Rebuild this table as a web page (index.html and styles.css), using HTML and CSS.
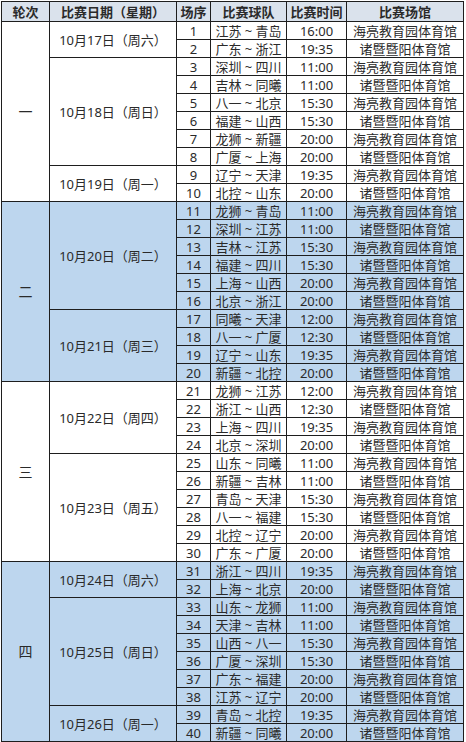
FILE: index.html
```html
<!DOCTYPE html>
<html lang="zh-CN">
<head>
<meta charset="utf-8">
<title>赛程</title>
<link rel="stylesheet" href="styles.css">
</head>
<body>
<table class="sched">
<colgroup>
<col class="c-round"><col class="c-date"><col class="c-no"><col class="c-team"><col class="c-time"><col class="c-venue">
</colgroup>
<thead>
<tr class="head"><th>轮次</th><th>比赛日期（星期）</th><th>场序</th><th>比赛球队</th><th>比赛时间</th><th>比赛场馆</th></tr>
</thead>
<tbody class="r-white">
<tr><td rowspan="10" class="round">一</td><td rowspan="2">10月17日（周六）</td><td>1</td><td>江苏 ~ 青岛</td><td>16:00</td><td>海亮教育园体育馆</td></tr>
<tr><td>2</td><td>广东 ~ 浙江</td><td>19:35</td><td>诸暨暨阳体育馆</td></tr>
<tr><td rowspan="6">10月18日（周日）</td><td>3</td><td>深圳 ~ 四川</td><td>11:00</td><td>海亮教育园体育馆</td></tr>
<tr><td>4</td><td>吉林 ~ 同曦</td><td>11:00</td><td>诸暨暨阳体育馆</td></tr>
<tr><td>5</td><td>八一 ~ 北京</td><td>15:30</td><td>海亮教育园体育馆</td></tr>
<tr><td>6</td><td>福建 ~ 山西</td><td>15:30</td><td>诸暨暨阳体育馆</td></tr>
<tr><td>7</td><td>龙狮 ~ 新疆</td><td>20:00</td><td>海亮教育园体育馆</td></tr>
<tr><td>8</td><td>广厦 ~ 上海</td><td>20:00</td><td>诸暨暨阳体育馆</td></tr>
<tr><td rowspan="2">10月19日（周一）</td><td>9</td><td>辽宁 ~ 天津</td><td>19:35</td><td>海亮教育园体育馆</td></tr>
<tr><td>10</td><td>北控 ~ 山东</td><td>20:00</td><td>诸暨暨阳体育馆</td></tr>
</tbody>
<tbody class="r-blue">
<tr><td rowspan="10" class="round">二</td><td rowspan="6">10月20日（周二）</td><td>11</td><td>龙狮 ~ 青岛</td><td>11:00</td><td>海亮教育园体育馆</td></tr>
<tr><td>12</td><td>深圳 ~ 江苏</td><td>11:00</td><td>诸暨暨阳体育馆</td></tr>
<tr><td>13</td><td>吉林 ~ 江苏</td><td>15:30</td><td>海亮教育园体育馆</td></tr>
<tr><td>14</td><td>福建 ~ 四川</td><td>15:30</td><td>诸暨暨阳体育馆</td></tr>
<tr><td>15</td><td>上海 ~ 山西</td><td>20:00</td><td>海亮教育园体育馆</td></tr>
<tr><td>16</td><td>北京 ~ 浙江</td><td>20:00</td><td>诸暨暨阳体育馆</td></tr>
<tr><td rowspan="4">10月21日（周三）</td><td>17</td><td>同曦 ~ 天津</td><td>12:00</td><td>海亮教育园体育馆</td></tr>
<tr><td>18</td><td>八一 ~ 广厦</td><td>12:30</td><td>诸暨暨阳体育馆</td></tr>
<tr><td>19</td><td>辽宁 ~ 山东</td><td>19:35</td><td>海亮教育园体育馆</td></tr>
<tr><td>20</td><td>新疆 ~ 北控</td><td>20:00</td><td>诸暨暨阳体育馆</td></tr>
</tbody>
<tbody class="r-white">
<tr><td rowspan="10" class="round">三</td><td rowspan="4">10月22日（周四）</td><td>21</td><td>龙狮 ~ 江苏</td><td>12:00</td><td>海亮教育园体育馆</td></tr>
<tr><td>22</td><td>浙江 ~ 山西</td><td>12:30</td><td>诸暨暨阳体育馆</td></tr>
<tr><td>23</td><td>上海 ~ 四川</td><td>19:35</td><td>海亮教育园体育馆</td></tr>
<tr><td>24</td><td>北京 ~ 深圳</td><td>20:00</td><td>诸暨暨阳体育馆</td></tr>
<tr><td rowspan="6">10月23日（周五）</td><td>25</td><td>山东 ~ 同曦</td><td>11:00</td><td>海亮教育园体育馆</td></tr>
<tr><td>26</td><td>新疆 ~ 吉林</td><td>11:00</td><td>诸暨暨阳体育馆</td></tr>
<tr><td>27</td><td>青岛 ~ 天津</td><td>15:30</td><td>海亮教育园体育馆</td></tr>
<tr><td>28</td><td>八一 ~ 福建</td><td>15:30</td><td>诸暨暨阳体育馆</td></tr>
<tr><td>29</td><td>北控 ~ 辽宁</td><td>20:00</td><td>海亮教育园体育馆</td></tr>
<tr><td>30</td><td>广东 ~ 广厦</td><td>20:00</td><td>诸暨暨阳体育馆</td></tr>
</tbody>
<tbody class="r-blue">
<tr><td rowspan="10" class="round">四</td><td rowspan="2">10月24日（周六）</td><td>31</td><td>浙江 ~ 四川</td><td>19:35</td><td>海亮教育园体育馆</td></tr>
<tr><td>32</td><td>上海 ~ 北京</td><td>20:00</td><td>诸暨暨阳体育馆</td></tr>
<tr><td rowspan="6">10月25日（周日）</td><td>33</td><td>山东 ~ 龙狮</td><td>11:00</td><td>海亮教育园体育馆</td></tr>
<tr><td>34</td><td>天津 ~ 吉林</td><td>11:00</td><td>诸暨暨阳体育馆</td></tr>
<tr><td>35</td><td>山西 ~ 八一</td><td>15:30</td><td>海亮教育园体育馆</td></tr>
<tr><td>36</td><td>广厦 ~ 深圳</td><td>15:30</td><td>诸暨暨阳体育馆</td></tr>
<tr><td>37</td><td>广东 ~ 福建</td><td>20:00</td><td>海亮教育园体育馆</td></tr>
<tr><td>38</td><td>江苏 ~ 辽宁</td><td>20:00</td><td>诸暨暨阳体育馆</td></tr>
<tr><td rowspan="2">10月26日（周一）</td><td>39</td><td>青岛 ~ 北控</td><td>19:35</td><td>海亮教育园体育馆</td></tr>
<tr><td>40</td><td>新疆 ~ 同曦</td><td>20:00</td><td>诸暨暨阳体育馆</td></tr>
</tbody>
</table>
</body>
</html>
```
FILE: styles.css
```css
html, body {
  margin: 0;
  padding: 0;
  background: #ffffff;
}
body {
  padding: 1px 0 0 1px;
}
.sched {
  border-collapse: collapse;
  table-layout: fixed;
  width: 462px;
  font-family: "Noto Sans", "Noto Sans CJK SC", sans-serif;
  font-size: 13px;
  color: #2a2a2a;
  text-spacing-trim: space-all;
}
.c-round { width: 48px; }
.c-date { width: 127px; }
.c-no { width: 34px; }
.c-team { width: 76px; }
.c-time { width: 60px; }
.c-venue { width: 117px; }
.sched th,
.sched td {
  border: 1px solid #1e1e1e;
  padding: 0;
  text-align: center;
  vertical-align: middle;
  line-height: 16px;
  height: 17px;
  white-space: nowrap;
  overflow: hidden;
}
.sched th {
  height: 19px;
  font-weight: bold;
  background: #dae2ec;
}
.r-white td { background: #ffffff; }
.r-blue td { background: #bdd6ee; }
.round { font-size: 14px; }
```
